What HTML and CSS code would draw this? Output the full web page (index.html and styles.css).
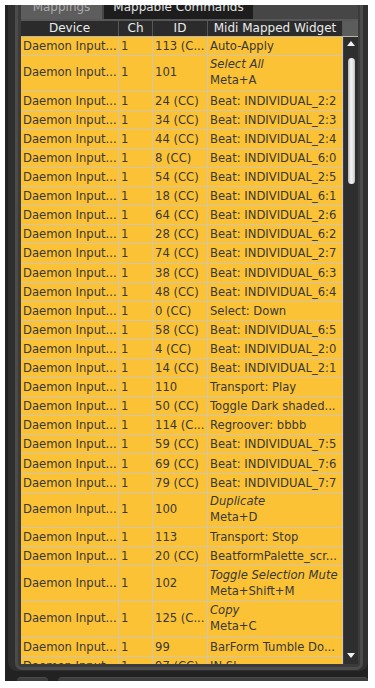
FILE: index.html
```html
<!DOCTYPE html>
<html>
<head>
<meta charset="utf-8">
<link rel="stylesheet" href="styles.css">
</head>
<body>
<div class="window">
  <div class="outer">
    <div class="panel">
      <div class="tabs">
        <div class="tab tab-active"><span>Mappings</span></div>
        <div class="tab tab-dark"><span>Mappable Commands</span></div>
      </div>
      <div class="band"></div>
      <div class="thead">
        <div class="th w1">Device</div>
        <div class="th w2">Ch</div>
        <div class="th w3">ID</div>
        <div class="th w4">Midi Mapped Widget</div>
        <div class="th ws"></div>
      </div>
      <div class="tbody">
        <div class="rows">
          <div class="row"><div class="cell w1">Daemon Input...</div><div class="cell w2">1</div><div class="cell w3">113 (C...</div><div class="cell w4">Auto-Apply</div></div>
          <div class="row tall"><div class="cell w1">Daemon Input...</div><div class="cell w2">1</div><div class="cell w3">101</div><div class="cell w4"><em>Select All</em><span>Meta+A</span></div></div>
          <div class="row"><div class="cell w1">Daemon Input...</div><div class="cell w2">1</div><div class="cell w3">24 (CC)</div><div class="cell w4">Beat: INDIVIDUAL_2:2</div></div>
          <div class="row"><div class="cell w1">Daemon Input...</div><div class="cell w2">1</div><div class="cell w3">34 (CC)</div><div class="cell w4">Beat: INDIVIDUAL_2:3</div></div>
          <div class="row"><div class="cell w1">Daemon Input...</div><div class="cell w2">1</div><div class="cell w3">44 (CC)</div><div class="cell w4">Beat: INDIVIDUAL_2:4</div></div>
          <div class="row"><div class="cell w1">Daemon Input...</div><div class="cell w2">1</div><div class="cell w3">8 (CC)</div><div class="cell w4">Beat: INDIVIDUAL_6:0</div></div>
          <div class="row"><div class="cell w1">Daemon Input...</div><div class="cell w2">1</div><div class="cell w3">54 (CC)</div><div class="cell w4">Beat: INDIVIDUAL_2:5</div></div>
          <div class="row"><div class="cell w1">Daemon Input...</div><div class="cell w2">1</div><div class="cell w3">18 (CC)</div><div class="cell w4">Beat: INDIVIDUAL_6:1</div></div>
          <div class="row"><div class="cell w1">Daemon Input...</div><div class="cell w2">1</div><div class="cell w3">64 (CC)</div><div class="cell w4">Beat: INDIVIDUAL_2:6</div></div>
          <div class="row"><div class="cell w1">Daemon Input...</div><div class="cell w2">1</div><div class="cell w3">28 (CC)</div><div class="cell w4">Beat: INDIVIDUAL_6:2</div></div>
          <div class="row"><div class="cell w1">Daemon Input...</div><div class="cell w2">1</div><div class="cell w3">74 (CC)</div><div class="cell w4">Beat: INDIVIDUAL_2:7</div></div>
          <div class="row"><div class="cell w1">Daemon Input...</div><div class="cell w2">1</div><div class="cell w3">38 (CC)</div><div class="cell w4">Beat: INDIVIDUAL_6:3</div></div>
          <div class="row"><div class="cell w1">Daemon Input...</div><div class="cell w2">1</div><div class="cell w3">48 (CC)</div><div class="cell w4">Beat: INDIVIDUAL_6:4</div></div>
          <div class="row"><div class="cell w1">Daemon Input...</div><div class="cell w2">1</div><div class="cell w3">0 (CC)</div><div class="cell w4">Select: Down</div></div>
          <div class="row"><div class="cell w1">Daemon Input...</div><div class="cell w2">1</div><div class="cell w3">58 (CC)</div><div class="cell w4">Beat: INDIVIDUAL_6:5</div></div>
          <div class="row"><div class="cell w1">Daemon Input...</div><div class="cell w2">1</div><div class="cell w3">4 (CC)</div><div class="cell w4">Beat: INDIVIDUAL_2:0</div></div>
          <div class="row"><div class="cell w1">Daemon Input...</div><div class="cell w2">1</div><div class="cell w3">14 (CC)</div><div class="cell w4">Beat: INDIVIDUAL_2:1</div></div>
          <div class="row"><div class="cell w1">Daemon Input...</div><div class="cell w2">1</div><div class="cell w3">110</div><div class="cell w4">Transport: Play</div></div>
          <div class="row"><div class="cell w1">Daemon Input...</div><div class="cell w2">1</div><div class="cell w3">50 (CC)</div><div class="cell w4">Toggle Dark shaded...</div></div>
          <div class="row"><div class="cell w1">Daemon Input...</div><div class="cell w2">1</div><div class="cell w3">114 (C...</div><div class="cell w4">Regroover: bbbb</div></div>
          <div class="row"><div class="cell w1">Daemon Input...</div><div class="cell w2">1</div><div class="cell w3">59 (CC)</div><div class="cell w4">Beat: INDIVIDUAL_7:5</div></div>
          <div class="row"><div class="cell w1">Daemon Input...</div><div class="cell w2">1</div><div class="cell w3">69 (CC)</div><div class="cell w4">Beat: INDIVIDUAL_7:6</div></div>
          <div class="row"><div class="cell w1">Daemon Input...</div><div class="cell w2">1</div><div class="cell w3">79 (CC)</div><div class="cell w4">Beat: INDIVIDUAL_7:7</div></div>
          <div class="row tall"><div class="cell w1">Daemon Input...</div><div class="cell w2">1</div><div class="cell w3">100</div><div class="cell w4"><em>Duplicate</em><span>Meta+D</span></div></div>
          <div class="row"><div class="cell w1">Daemon Input...</div><div class="cell w2">1</div><div class="cell w3">113</div><div class="cell w4">Transport: Stop</div></div>
          <div class="row"><div class="cell w1">Daemon Input...</div><div class="cell w2">1</div><div class="cell w3">20 (CC)</div><div class="cell w4">BeatformPalette_scr...</div></div>
          <div class="row tall"><div class="cell w1">Daemon Input...</div><div class="cell w2">1</div><div class="cell w3">102</div><div class="cell w4"><em>Toggle Selection Mute</em><span>Meta+Shift+M</span></div></div>
          <div class="row tall"><div class="cell w1">Daemon Input...</div><div class="cell w2">1</div><div class="cell w3">125 (C...</div><div class="cell w4"><em>Copy</em><span>Meta+C</span></div></div>
          <div class="row"><div class="cell w1">Daemon Input...</div><div class="cell w2">1</div><div class="cell w3">99</div><div class="cell w4">BarForm Tumble Do...</div></div>
          <div class="row"><div class="cell w1">Daemon Input...</div><div class="cell w2">1</div><div class="cell w3">97 (CC)</div><div class="cell w4">IN Sl...</div></div>
        </div>
        <div class="scroll">
          <svg class="arrow" width="8" height="5" viewBox="0 0 8 5"><polygon points="0,5 8,5 4,0" fill="#f0f0f0"/></svg>
          <div class="thumb"></div>
          <svg class="arrow arrow-down" width="8" height="5" viewBox="0 0 8 5"><polygon points="0,0 8,0 4,5" fill="#f0f0f0"/></svg>
        </div>
      </div>
    </div>
  </div>
  <div class="btabs">
    <div class="bt bt1"></div>
    <div class="bt bt2"></div>
  </div>
</div>
</body>
</html>
```

FILE: styles.css
```css
* { box-sizing: border-box; }
html, body { margin: 0; background: #ffffff; }
body {
  padding: 5px 0 0 5px;
  font-family: "DejaVu Sans", "Liberation Sans", sans-serif;
}
.window {
  width: 363px;
  height: 676px;
  background: #222222;
  overflow: hidden;
  display: flex;
  flex-direction: column;
}
.outer {
  flex: none;
  margin-left: 3px;
  width: 360px;
  height: 666px;
  background: #2f2f2f;
  border-radius: 0 0 9px 9px;
  padding: 0 5px 0 7px;
}
.panel {
  width: 348px;
  height: 664.5px;
  background: #3b3b3b;
  border: 3px solid #4b4b4b;
  border-top: 0;
  border-radius: 0 0 7px 7px;
  padding: 0 2px 3px 3px;
  display: flex;
  flex-direction: column;
}
.tabs {
  flex: none;
  height: 13.5px;
  display: flex;
  gap: 2px;
  background: #464646;
}
.tab {
  overflow: hidden;
  font-size: 12px;
  text-align: center;
}
.tab span {
  display: block;
  margin-top: -6px;
  line-height: 16px;
}
.tab-active { width: 81px; background: #5d5d5d; color: #ababab; }
.tab-dark { width: 149px; background: #1d1d1d; color: #e2e2e2; }
.band { flex: none; height: 2px; background: #585858; }
.thead {
  flex: none;
  display: flex;
  height: 16.5px;
  background: #2b2b2b;
  border-bottom: 1px solid #bdb5a0;
}
.th {
  color: #ebebeb;
  font-size: 12px;
  line-height: 15.5px;
  text-align: center;
  border-right: 1px solid #575757;
  white-space: nowrap;
  overflow: hidden;
}
.w1 { width: 98px; }
.w2 { width: 34px; }
.w3 { width: 55px; }
.w4 { width: 135px; }
.ws { width: 15px; background: #5c5c5c; border-right: 0; }
.tbody {
  flex: none;
  display: flex;
  height: 627px;
  overflow: hidden;
}
.rows {
  width: 322px;
  background: #fcc235;
}
.row {
  display: flex;
  height: 19.1px;
  border-bottom: 1px solid #cfc6ab;
}
.row.tall { height: 35.6px; }
.cell {
  display: flex;
  flex-direction: column;
  justify-content: center;
  padding-left: 2px;
  border-right: 1px solid #cfc6ab;
  font-size: 11.6px;
  line-height: 16px;
  color: #383838;
  white-space: nowrap;
  overflow: hidden;
}
.row.tall .cell { padding-bottom: 2px; }
.cell em { font-style: italic; }
.scroll {
  width: 15px;
  background: #2e2e2e;
  border-left: 1px solid #3e3e3e;
  display: flex;
  flex-direction: column;
  align-items: center;
  padding: 3.5px 0 6.5px;
}
.arrow { display: block; flex: none; }
.thumb {
  flex: none;
  margin-top: 12px;
  width: 7px;
  height: 126px;
  border-radius: 3.5px;
  background: linear-gradient(to right, #b9b9b9, #f2f2f2 40%, #e6e6e6 70%, #bdbdbd);
}
.arrow-down { margin-top: auto; }
.btabs {
  flex: none;
  margin-top: 6px;
  height: 4px;
  display: flex;
}
.bt { background: #3e3e3e; border-radius: 5px 5px 0 0; border-top: 1px solid #4a4a4a; }
.bt1 { margin-left: 12px; width: 31px; }
.bt2 { margin-left: 10px; flex: 1; }
```
